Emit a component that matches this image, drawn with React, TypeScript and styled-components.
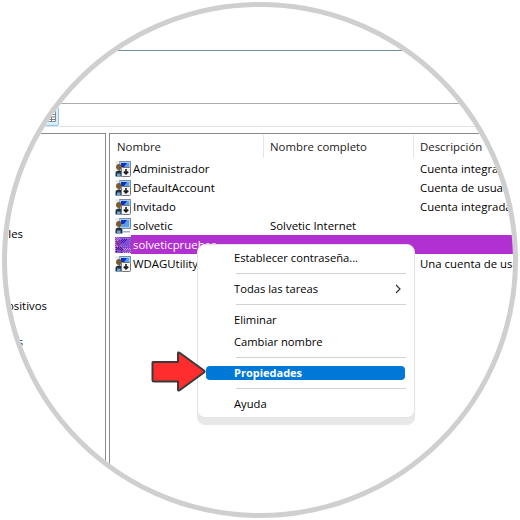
import React from "react";
import styled, { createGlobalStyle } from "styled-components";

const GlobalStyle = createGlobalStyle`
    html, body {
        margin: 0;
        padding: 0;
        background: #fff;
    }
`;

const users = [
    { name: "Administrador", full: "", desc: "Cuenta integrada para la administración", disabled: true },
    { name: "DefaultAccount", full: "", desc: "Cuenta de usuario administrada", disabled: true },
    { name: "Invitado", full: "", desc: "Cuenta integrada para el acceso", disabled: true },
    { name: "solvetic", full: "Solvetic Internet", desc: "", disabled: false },
    { name: "solveticpruebas", full: "", desc: "", disabled: false, selected: true },
    { name: "WDAGUtilityAccount", full: "", desc: "Una cuenta de usuario administrada", disabled: true },
];

const UserIcon = ({ disabled, selected }: { disabled: boolean; selected?: boolean }) => (
    <IconSvg width="16" height="16" viewBox="0 0 16 16" shapeRendering={selected ? "crispEdges" : undefined}>
        {selected && (
            <defs>
                <pattern id="dither" width="2" height="2" patternUnits="userSpaceOnUse">
                    <rect width="1" height="1" fill="#b030d0" />
                    <rect x="1" y="1" width="1" height="1" fill="#b030d0" />
                </pattern>
            </defs>
        )}
        <rect x="4.500" y="0.500" width="11" height="10" fill="#a9d2f2" stroke="#7c8c9a" />
        <path d="M6 2h8v7H6z" fill="#5aa0e6" />
        <path d="M6 2h6l-3 4H6z" fill="#0a2fc4" />
        <rect x="0.500" y="0.500" width="4" height="2" fill="#dde2e8" />
        <path d="M3.800 3c1.700 0 2.700 1.200 2.700 2.900S5.500 9 3.800 9 1 7.600 1 5.900 2.100 3 3.800 3z" fill="#7d5a2b" />
        <path d="M0.500 15.500V12c0-1.600 1.400-2.500 3.400-2.500s3.600.9 3.600 2.500v3.500z" fill="#22303c" />
        <path d="M2 15.500v-3h3.500v3z" fill="#6fa4d6" />
        {disabled ? (
            <>
                <rect x="6.500" y="6.500" width="9" height="9" rx="1" fill="#f4f4f4" stroke="#757575" />
                <path d="M11 8v4.500M8.800 10.600l2.200 2.300 2.200-2.300" fill="none" stroke="#1c1c1c" strokeWidth="1.600" />
            </>
        ) : (
            <path d="M7 13h8v1.500H7z" fill="#9fb2c4" />
        )}
        {selected && (
            <>
                <rect width="16" height="16" fill="#2a20c0" opacity="0.4" />
                <rect width="16" height="16" fill="url(#dither)" />
            </>
        )}
    </IconSvg>
);

const App = () => {
    return (
        <>
            <GlobalStyle />
            <Lens>
                <TitleBand />
                <MenuBand />
                <ToolBand>
                    <ToolButton>
                        <svg width="9" height="11" viewBox="0 0 9 11">
                            <path d="M.5.500h8v10h-8z" fill="#fff" stroke="#8a8a8a" />
                            <path d="M.5 3.500h8M.5 6h8M.5 8.500h8M4.500.5v10" stroke="#7a7a7a" />
                        </svg>
                    </ToolButton>
                </ToolBand>
                <Panes>
                    <TreePane>
                        <TreeRow $gap={54} $end={82}>Usuarios y grupos locales</TreeRow>
                        <TreeRow $gap={18} $end={58}>Administrador de dispositivos</TreeRow>
                        <TreeRow $gap={0} $end={82}>Servicios</TreeRow>
                    </TreePane>
                    <ListPane>
                        <HeaderRow>
                            <HeaderCell $width={153}>Nombre</HeaderCell>
                            <HeaderCell $width={150}>Nombre completo</HeaderCell>
                            <HeaderCell $width={120}>Descripción</HeaderCell>
                        </HeaderRow>
                        {users.map((u) => (
                            <UserRow key={u.name}>
                                <UserIcon disabled={u.disabled} selected={u.selected} />
                                <RowBody $selected={u.selected}>
                                    <Cell>{u.name}</Cell>
                                    <Cell>{u.full}</Cell>
                                    <Cell>{u.desc}</Cell>
                                </RowBody>
                            </UserRow>
                        ))}
                    </ListPane>
                </Panes>
            </Lens>
            <ContextMenu>
                <MenuItem>Establecer contraseña...</MenuItem>
                <Separator />
                <MenuItem>
                    Todas las tareas
                    <svg width="8" height="10" viewBox="0 0 8 10">
                        <path d="M2 1l4 4-4 4" fill="none" stroke="#333" strokeWidth="1.200" />
                    </svg>
                </MenuItem>
                <Separator />
                <MenuItem>Eliminar</MenuItem>
                <MenuItem>Cambiar nombre</MenuItem>
                <Separator />
                <ActiveItem>Propiedades</ActiveItem>
                <Separator />
                <MenuItem>Ayuda</MenuItem>
            </ContextMenu>
            <PointerArrow width="56" height="42" viewBox="0 0 56 42">
                <path
                    d="M2 11h25V2.500c0-1 .8-1.400 1.600-.8L53 19.500c.8.600.8 1.400 0 2L28.600 39.300c-.8.600-1.600.2-1.600-.8V30.500H3c-1 0-1.500-.5-1.500-1.500V11.500c0-.3.200-.5.500-.5z"
                    fill="#ff2d2d"
                    stroke="#3a3a3a"
                    strokeWidth="2"
                    strokeLinejoin="round"
                />
            </PointerArrow>
        </>
    );
};

const Lens = styled.div`
    position: relative;
    box-sizing: border-box;
    width: 516px;
    height: 516px;
    margin: 2px;
    border: 5px solid #cfcfcf;
    border-radius: 50%;
    overflow: hidden;
    background: #fff;
    font-family: "Open Sans", "Noto Sans", sans-serif;
    font-size: 11.4px;
    color: #000;
`;

const TitleBand = styled.div`
    height: 43px;
    border-bottom: 1px solid #6f8fa0;
`;

const MenuBand = styled.div`
    height: 52px;
    border-bottom: 1px solid #ababab;
`;

const ToolBand = styled.div`
    display: flex;
    align-items: flex-end;
    height: 22px;
    padding-left: 31px;
    border-bottom: 1px solid #e2e2e2;
`;

const ToolButton = styled.div`
    display: flex;
    align-items: center;
    justify-content: flex-end;
    box-sizing: border-box;
    width: 21px;
    height: 19px;
    padding-right: 2px;
    background: #d9eefc;
    border: 1px solid #90c8f0;
    border-radius: 2px;
`;

const Panes = styled.div`
    display: grid;
    grid-template-columns: 99px 1fr;
    column-gap: 3px;
    height: 400px;
    margin-top: 6px;
`;

const TreePane = styled.div`
    display: flex;
    flex-direction: column;
    padding-top: 91px;
    border-top: 1px solid #8a8a8a;
    border-right: 1px solid #8a8a8a;
`;

const TreeRow = styled.div<{ $gap: number; $end: number }>`
    display: flex;
    justify-content: flex-end;
    height: 18px;
    margin-bottom: ${(p) => p.$gap}px;
    padding-right: ${(p) => p.$end}px;
    line-height: 18px;
    white-space: nowrap;
`;

const ListPane = styled.div`
    overflow: hidden;
    border-top: 1px solid #8a8a8a;
    border-left: 1px solid #8a8a8a;
`;

const HeaderRow = styled.div`
    display: flex;
    height: 25px;
    padding-left: 1px;
`;

const HeaderCell = styled.div<{ $width: number }>`
    box-sizing: border-box;
    flex: 0 0 ${(p) => p.$width}px;
    height: 23px;
    margin-top: 1px;
    padding-left: 6px;
    line-height: 23px;
    color: #1a1a1a;
    white-space: nowrap;
    border-right: 1px solid #e5e5e5;
`;

const UserRow = styled.div`
    display: flex;
    height: 19px;
    padding-left: 5px;
`;

const IconSvg = styled.svg`
    flex: none;
    margin-top: 2px;
`;

const RowBody = styled.div<{ $selected?: boolean }>`
    display: grid;
    flex: 1;
    grid-template-columns: 137px 150px 1fr;
    padding-left: 2px;
    line-height: 20px;
    white-space: nowrap;
    background: ${(p) => (p.$selected ? "#b030d0" : "transparent")};
    color: ${(p) => (p.$selected ? "#fff" : "#000")};
`;

const Cell = styled.span`
    overflow: visible;
`;

const ContextMenu = styled.div`
    position: absolute;
    left: 197px;
    top: 244px;
    box-sizing: border-box;
    width: 218px;
    padding: 2px 9px 2px 8px;
    background: #fff;
    border: 1px solid #e4e4e4;
    border-radius: 8px;
    box-shadow: 0 7px 1px 0 #e8e8e8;
    font-family: "Open Sans", "Noto Sans", sans-serif;
    font-size: 11.2px;
    line-height: 21px;
    color: #000;
`;

const MenuItem = styled.div`
    display: flex;
    align-items: flex-start;
    justify-content: space-between;
    height: 22px;
    padding: 0 3px 0 28px;
    white-space: nowrap;

    svg {
        margin-top: 6px;
    }
`;

const ActiveItem = styled.div`
    height: 14px;
    margin: 8px 0;
    padding-left: 28px;
    font-size: 11px;
    font-weight: 700;
    line-height: 14px;
    color: #fff;
    background: #0078d7;
    border-radius: 4px;
`;

const Separator = styled.div`
    height: 1px;
    margin: 4px -1px 4px 30px;
    background: #d2d2d2;
`;

const PointerArrow = styled.svg`
    position: absolute;
    left: 151px;
    top: 351px;
`;

export default App;
